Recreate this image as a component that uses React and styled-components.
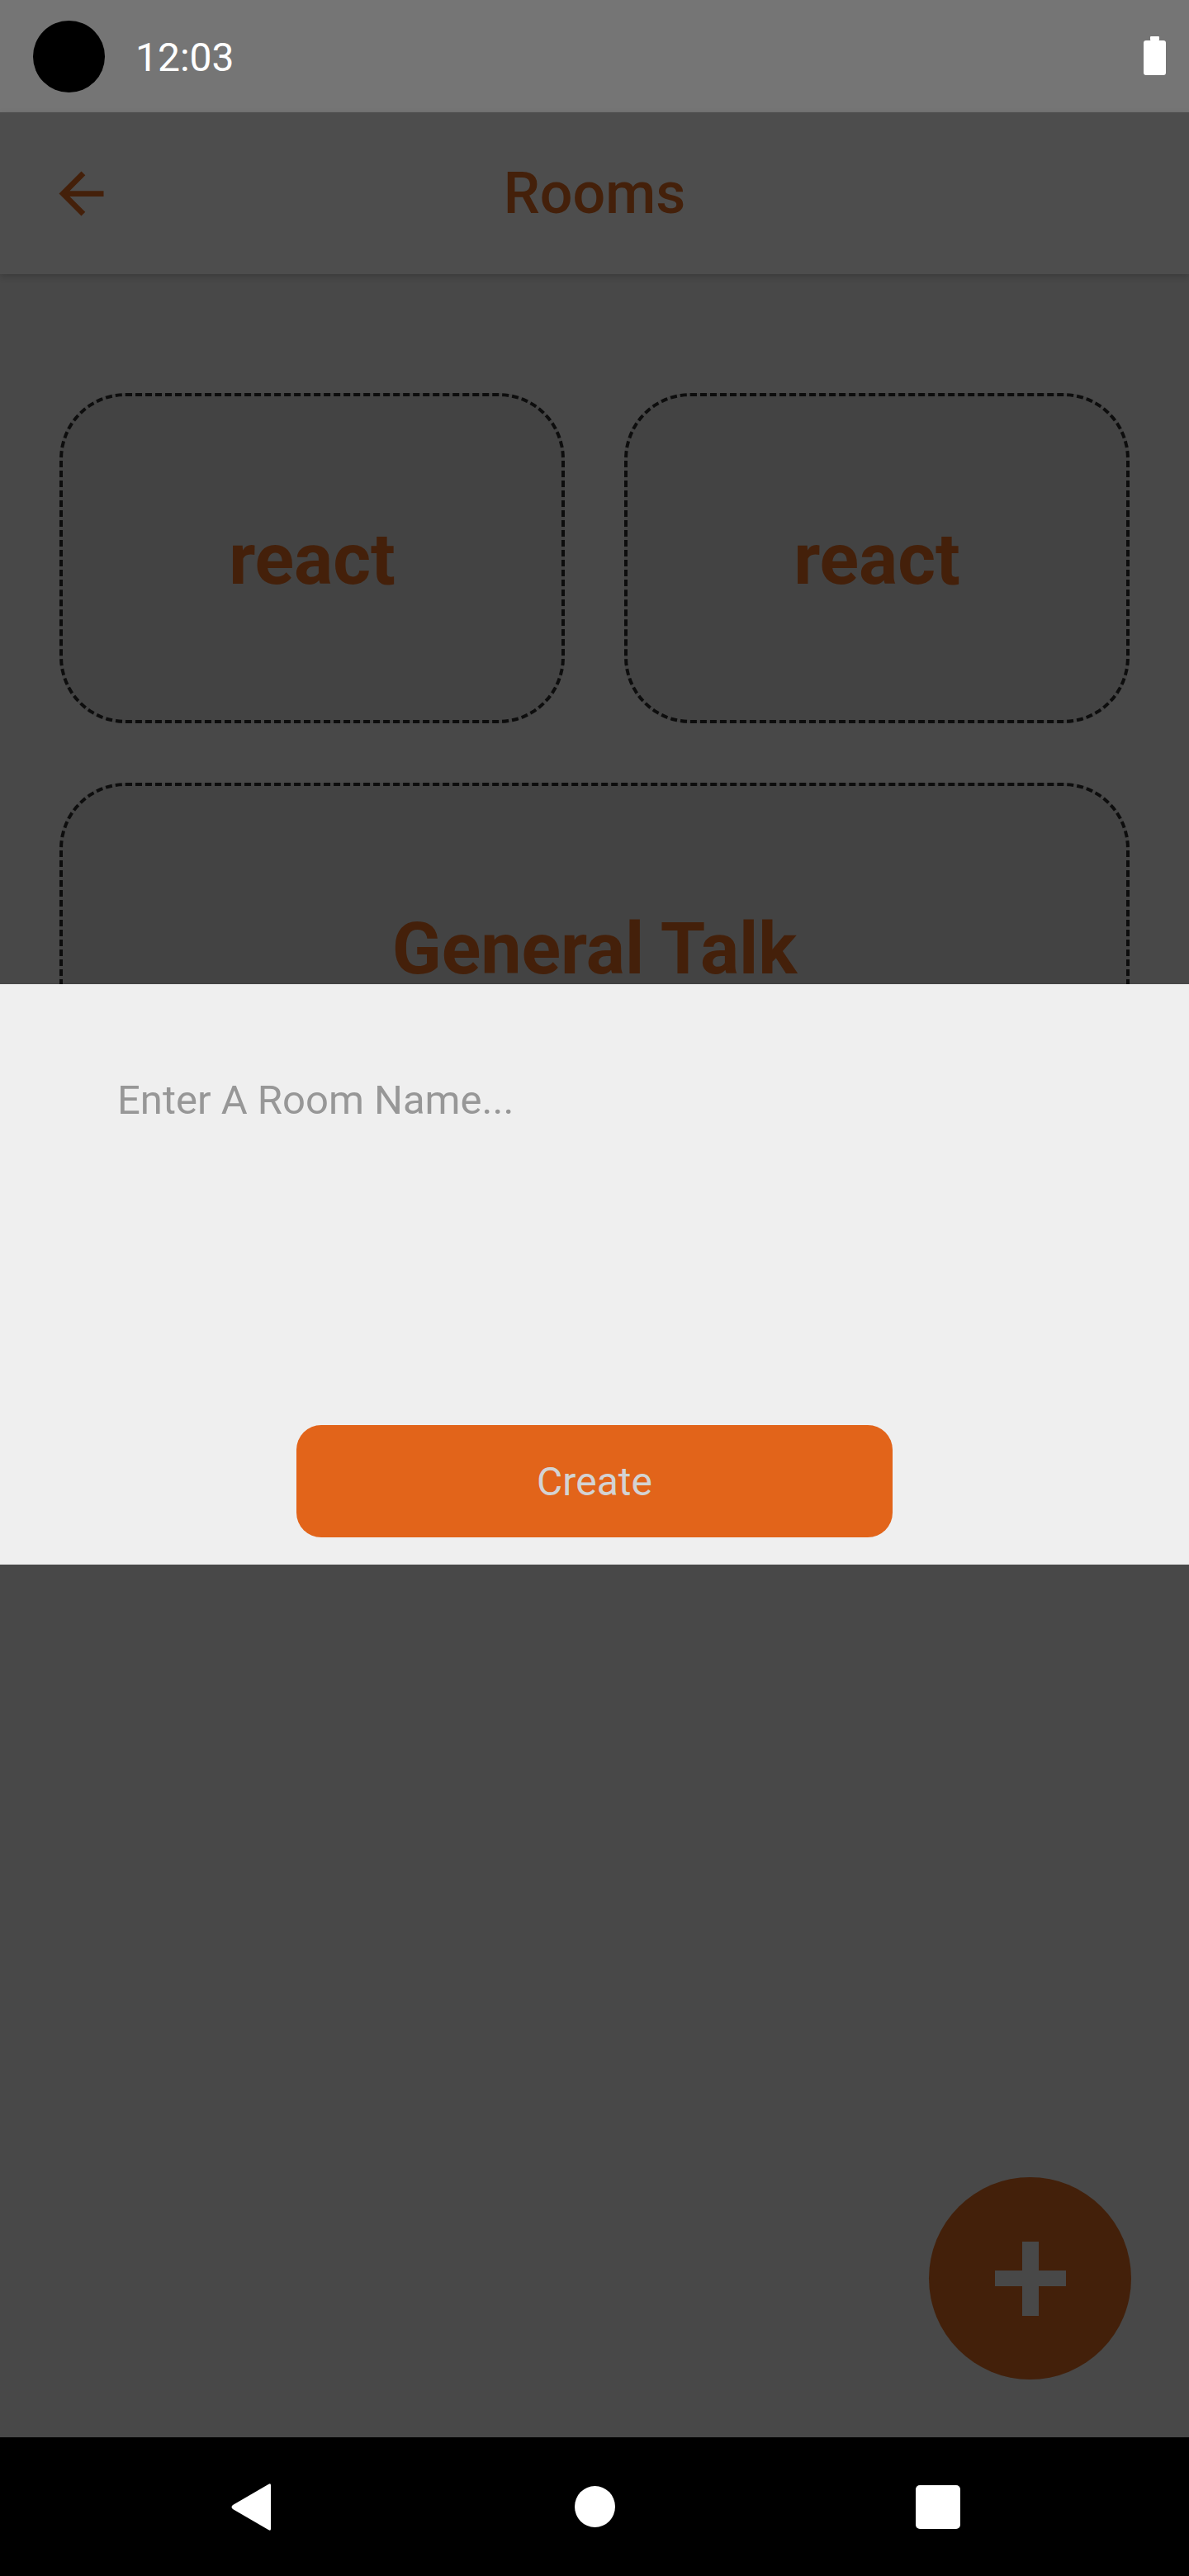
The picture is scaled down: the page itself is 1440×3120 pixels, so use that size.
import styled, { createGlobalStyle } from "styled-components";

const Global = createGlobalStyle`
  html, body {
    margin: 0;
    padding: 0;
    background: #484848;
  }
  * {
    box-sizing: border-box;
  }
`

const Screen = styled.div`
  position: relative;
  width: 1440px;
  height: 3120px;
  display: flex;
  flex-direction: column;
  font-family: Roboto, "Noto Sans", sans-serif;
  overflow: hidden;
`

const StatusBar = styled.div`
  height: 136px;
  background: #757575;
  display: flex;
  align-items: center;
  padding: 0 28px 0 40px;
`

const Camera = styled.div`
  width: 87px;
  height: 87px;
  border-radius: 50%;
  background: #000;
`

const Clock = styled.span`
  margin-left: 37px;
  margin-top: 3px;
  font-size: 48px;
  color: #fff;
`

const Battery = styled.div`
  margin-left: auto;
  margin-top: 4px;
  position: relative;
  width: 27px;
  height: 42px;
  background: #fff;
  border-radius: 3px;

  &::before {
    content: "";
    position: absolute;
    top: -5px;
    left: 8px;
    width: 11px;
    height: 5px;
    background: #fff;
    border-radius: 1px;
  }
`

const Header = styled.header`
  height: 196px;
  background: #4d4d4d;
  display: grid;
  grid-template-columns: 1fr auto 1fr;
  align-items: center;
  padding-left: 58px;
  position: relative;
  z-index: 1;
  box-shadow: 0 3px 8px rgba(0, 0, 0, 0.18);
`

const BackButton = styled.button`
  justify-self: start;
  background: none;
  border: 0;
  padding: 0;
  display: flex;
  color: #44200a;
`

const Title = styled.h1`
  margin: 0 0 0 -58px;
  font-size: 70px;
  font-weight: 500;
  color: #44200a;
`

const Content = styled.main`
  position: relative;
  flex: 1;
  background: #484848;
  padding: 144px 72px 0;
`

const Grid = styled.div`
  display: grid;
  grid-template-columns: 1fr 1fr;
  gap: 72px;
`

const Card = styled.div`
  grid-column: ${(p) => (p.$wide ? "1 / -1" : "auto")};
  height: 400px;
  border: 4px dashed #0d0d0d;
  border-radius: 80px;
  background: #434343;
  display: flex;
  align-items: center;
  justify-content: center;
  font-size: 88px;
  font-weight: 700;
  color: #44200a;
`

const Fab = styled.button`
  position: absolute;
  right: 70px;
  bottom: 70px;
  width: 245px;
  height: 245px;
  border-radius: 50%;
  border: 0;
  background: #43200a;
  display: flex;
  align-items: center;
  justify-content: center;
  padding: 0;
`

const NavBar = styled.nav`
  height: 168px;
  background: #000;
  display: flex;
  align-items: center;
  justify-content: center;
  gap: 356px;
`

const NavSlot = styled.div`
  width: 60px;
  display: flex;
  justify-content: center;
`

const HomeDot = styled.div`
  width: 49px;
  height: 50px;
  border-radius: 50%;
  background: #fff;
`

const RecentSquare = styled.div`
  width: 54px;
  height: 53px;
  border-radius: 5px;
  background: #fff;
`

const Sheet = styled.div`
  position: absolute;
  left: 0;
  right: 0;
  top: 1192px;
  height: 703px;
  background: #efefef;
  display: flex;
  flex-direction: column;
  justify-content: space-between;
  padding: 112px 0 33px;
`

const RoomInput = styled.input`
  margin-left: 142px;
  width: 1160px;
  height: 56px;
  border: 0;
  outline: none;
  background: transparent;
  padding: 0;
  font-family: Roboto, "Noto Sans", sans-serif;
  font-size: 49px;
  color: #333;

  &::placeholder {
    color: #979797;
  }
`

const CreateButton = styled.button`
  align-self: center;
  width: 722px;
  height: 136px;
  border: 0;
  border-radius: 30px;
  background: #e2641a;
  color: #d3d3d3;
  font-family: Roboto, "Noto Sans", sans-serif;
  font-size: 48px;
`

const rooms = [
  { name: "react" },
  { name: "react" },
  { name: "General Talk", wide: true },
]

export default function App() {
  return (
    <Screen>
      <Global />
      <StatusBar>
        <Camera />
        <Clock>12:03</Clock>
        <Battery />
      </StatusBar>
      <Header>
        <BackButton>
          <svg width="81" height="81" viewBox="0 0 24 24" fill="currentColor">
            <path d="M20 11H7.83l5.59-5.59L12 4l-8 8 8 8 1.41-1.41L7.83 13H20v-2z" />
          </svg>
        </BackButton>
        <Title>Rooms</Title>
        <span />
      </Header>
      <Content>
        <Grid>
          {rooms.map((r, i) => (
            <Card key={i} $wide={r.wide}>
              {r.name}
            </Card>
          ))}
        </Grid>
        <Fab>
          <svg width="90" height="90" viewBox="0 0 90 90" fill="#484848">
            <rect x="35" y="0" width="20" height="90" />
            <rect x="2" y="35" width="86" height="19" />
          </svg>
        </Fab>
      </Content>
      <NavBar>
        <NavSlot>
          <svg width="50" height="57" viewBox="0 0 50 57" fill="#fff">
            <path d="M49 2 L49 55 Q49 58 46 56 L3 31 Q0 28.5 3 26 L46 1 Q49 -1 49 2 Z" />
          </svg>
        </NavSlot>
        <NavSlot>
          <HomeDot />
        </NavSlot>
        <NavSlot>
          <RecentSquare />
        </NavSlot>
      </NavBar>
      <Sheet>
        <RoomInput placeholder="Enter A Room Name..." />
        <CreateButton>Create</CreateButton>
      </Sheet>
    </Screen>
  );
}
